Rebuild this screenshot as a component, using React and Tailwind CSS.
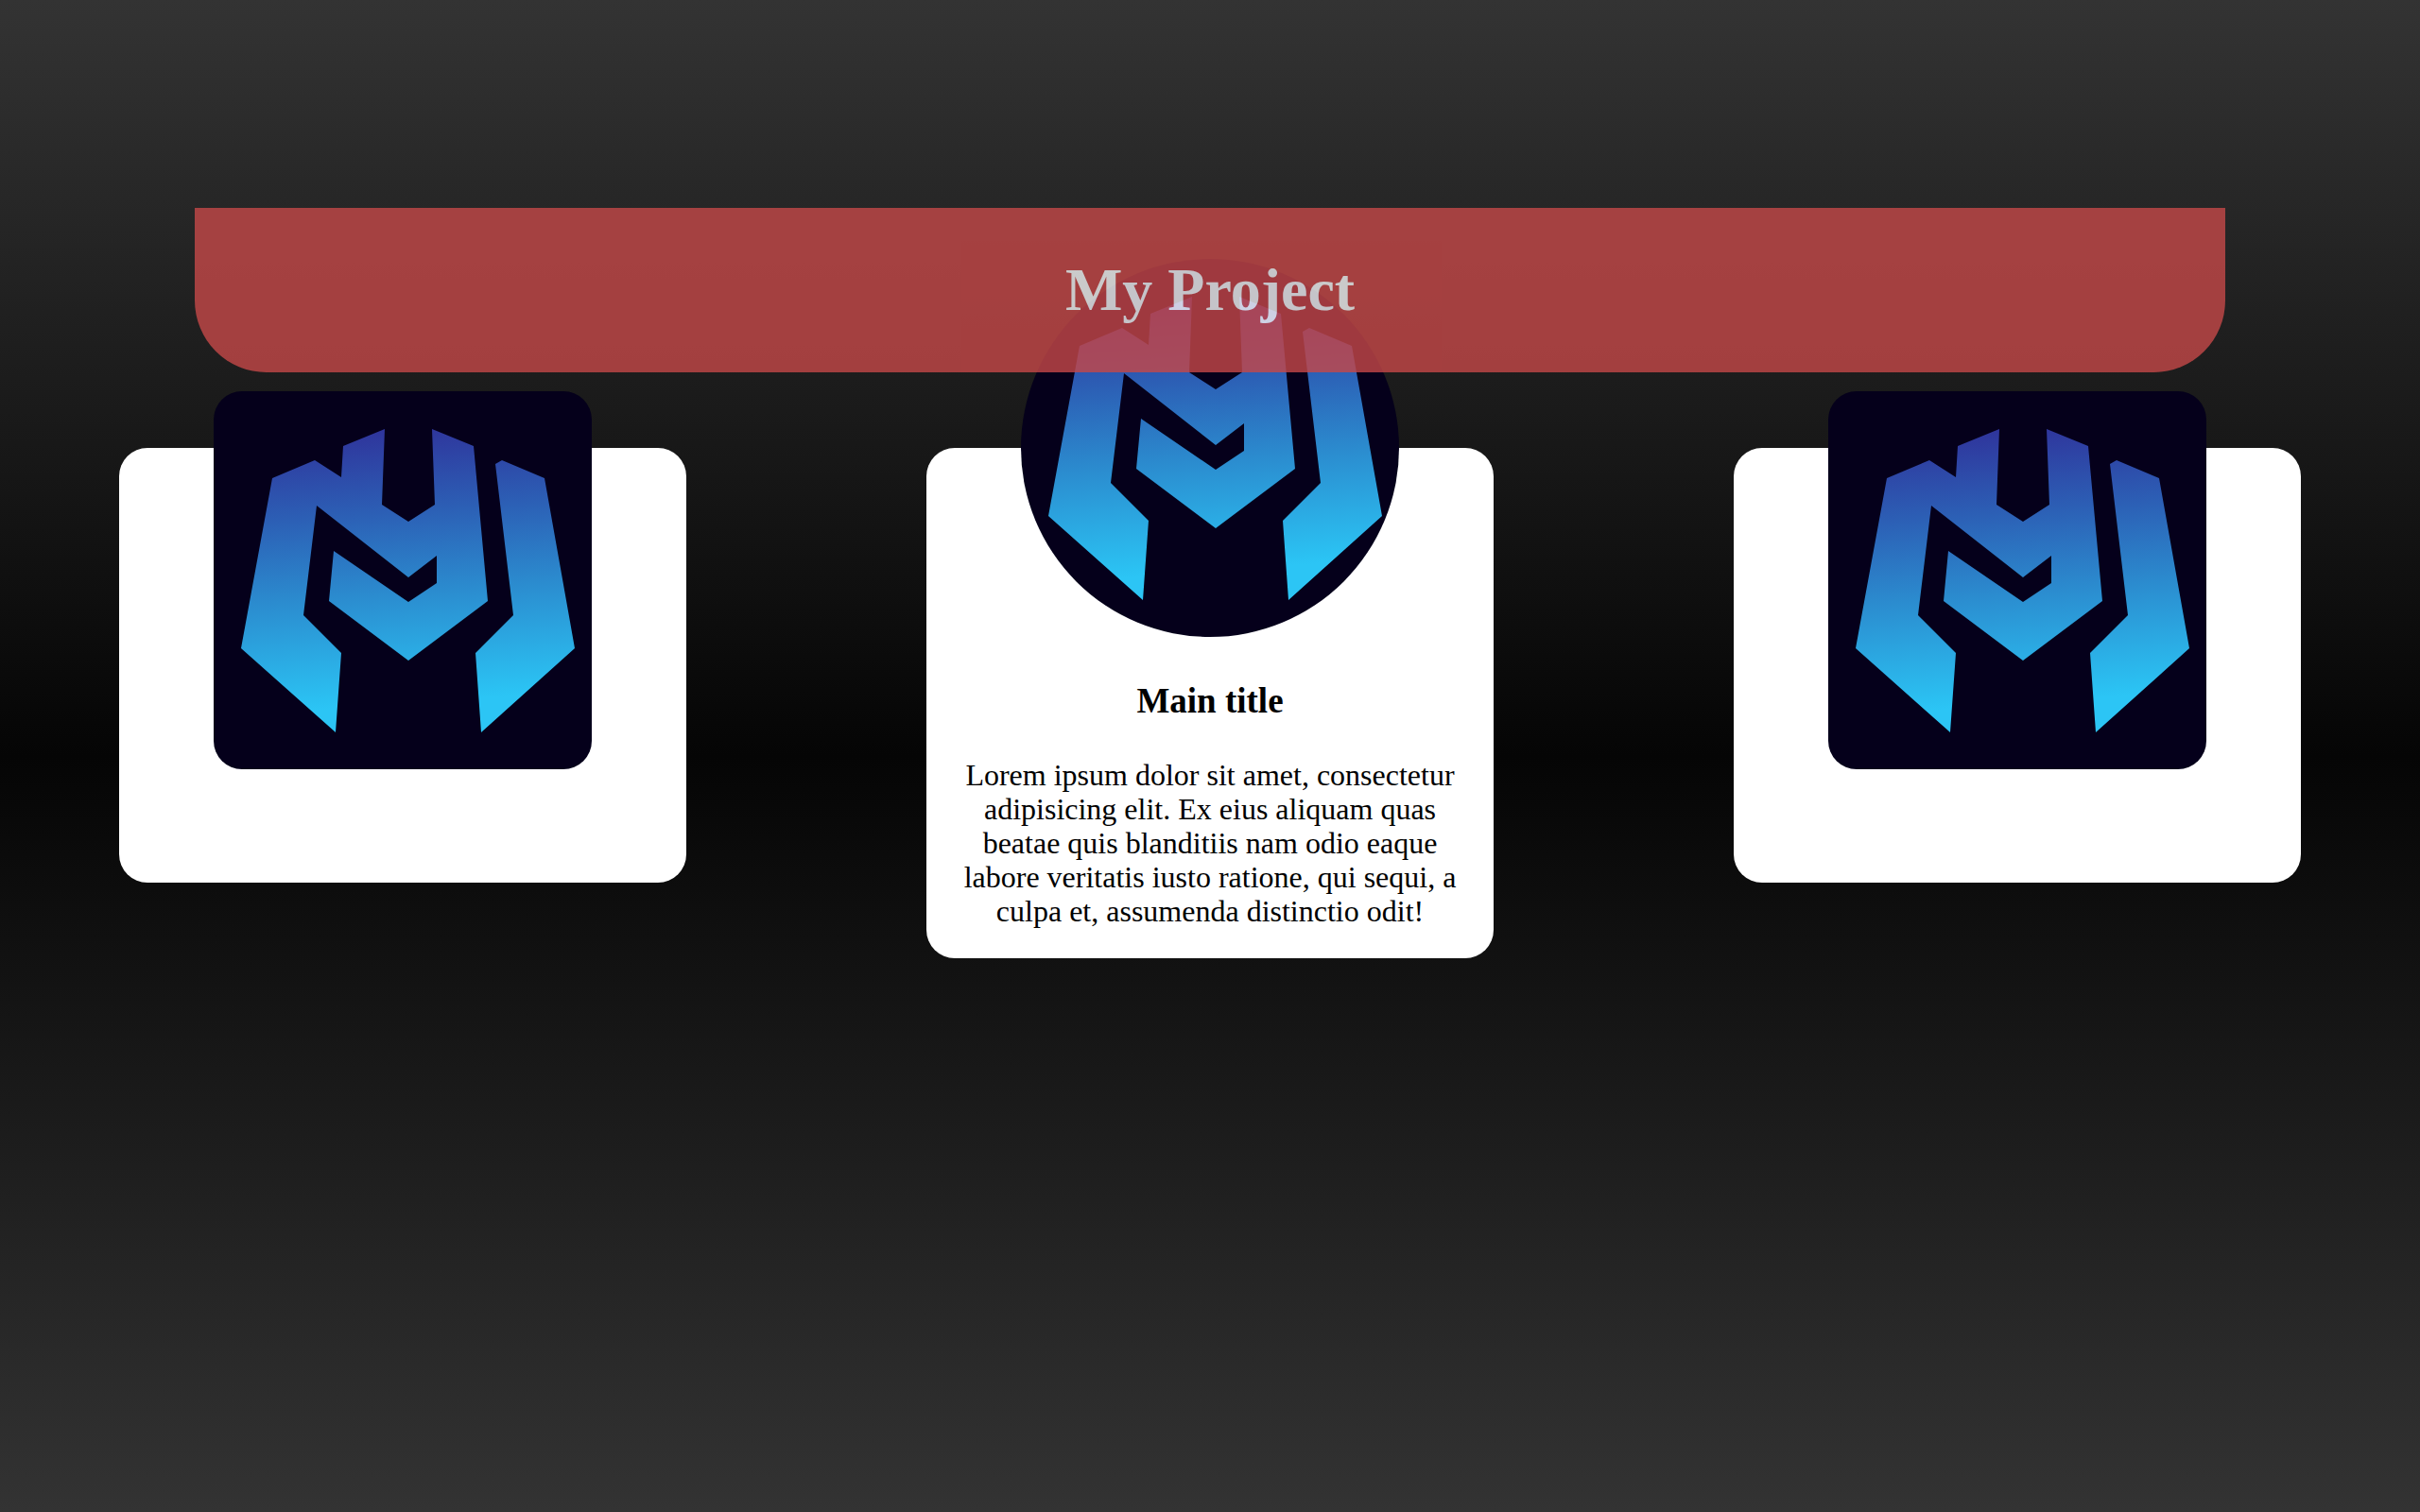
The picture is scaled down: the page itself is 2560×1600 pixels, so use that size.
function Emblem({ id, className }) {
  return (
    <svg
      viewBox="0 0 400 400"
      role="img"
      aria-label="Project logo"
      className={`block size-[400px] shrink-0 bg-[#05001b] ${className}`}
    >
      <defs>
        <linearGradient id={id} gradientUnits="userSpaceOnUse" x1="190" y1="40" x2="212" y2="330">
          <stop offset="0" stopColor="#2f359c" />
          <stop offset="0.3" stopColor="#2c5fb5" />
          <stop offset="0.6" stopColor="#2b8ccf" />
          <stop offset="0.97" stopColor="#2bc1f2" />
          <stop offset="1" stopColor="#2cc5f5" />
        </linearGradient>
      </defs>
      <g fill={`url(#${id})`}>
        <path d="M62 92 107 73 135 91 137 58 181 40 178 120 206 138 234 120 231 40 275 58 290 222 206 285 122 222 127 169 206 223 236 203 236 174 206 197 109 121 95 237 135 277 129 361 29 272Z" />
        <path d="M298 77 305 73 350 92 382 272 283 361 277 277 317 237Z" />
      </g>
    </svg>
  );
}

function SideCard({ id }) {
  return (
    <article className="flex w-[600px] flex-col items-center rounded-[30px] bg-white pb-[120px]">
      <Emblem id={id} className="-mt-[60px] rounded-[30px]" />
    </article>
  );
}

export default function App() {
  return (
    <div className="min-h-screen bg-[linear-gradient(#333333,#050505,#333333)] pt-[220px] font-['Liberation_Serif',serif] text-black">
      <header className="relative z-10 mx-[206px] rounded-b-[76px] bg-[#c64848] py-[50px] text-center text-[#f5f5f5] opacity-80">
        <h1 className="text-[64px] leading-[74px] font-bold">My Project</h1>
      </header>
      <main className="mt-20 flex items-start justify-between px-[126px]">
        <SideCard id="emblem-left" />
        <article className="flex w-[600px] flex-col items-center rounded-[30px] bg-white px-8 pb-8 text-center">
          <Emblem id="emblem-main" className="-mt-[200px] rounded-full" />
          <h3 className="mt-[46px] text-[37px] leading-[43px] font-bold">Main title</h3>
          <p className="mt-[39px] text-[32px] leading-9">
            Lorem ipsum dolor sit amet, consectetur adipisicing elit. Ex eius aliquam quas beatae quis
            blanditiis nam odio eaque labore veritatis iusto ratione, qui sequi, a culpa et, assumenda
            distinctio odit!
          </p>
        </article>
        <SideCard id="emblem-right" />
      </main>
    </div>
  );
}
